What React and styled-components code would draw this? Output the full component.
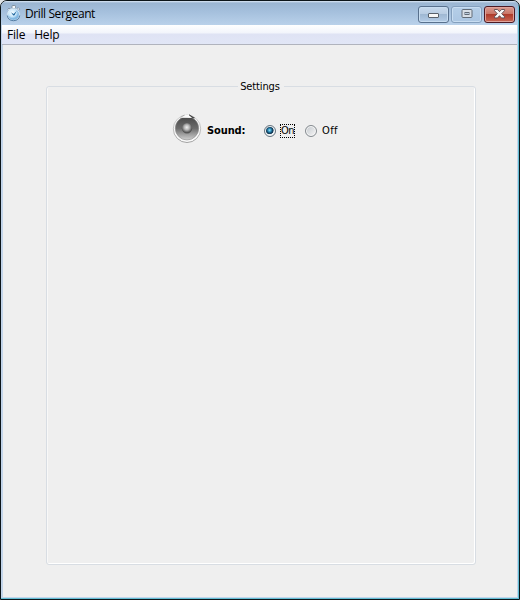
import React, { useState } from "react";
import styled, { createGlobalStyle } from "styled-components";

const GlobalStyle = createGlobalStyle`
  * { box-sizing: border-box; }
  body { margin: 0; background: #dfe3e6; overflow: hidden; }
`;

const Window = styled.div`
  width: 520px;
  height: 600px;
  display: flex;
  flex-direction: column;
  padding: 0 2px 2px 1px;
  border: 1px solid #0c1519;
  border-radius: 7px 7px 0 0;
  background: #c3d5ea;
  box-shadow: inset -1px -1px #62bdd3;
  color: #000;
  overflow: hidden;
`;

const TitleBar = styled.header`
  height: 24px;
  flex: none;
  display: flex;
  align-items: center;
  margin: 0 -1px;
  padding: 0 3px 0 4px;
  background: linear-gradient(#dce9f6 0, #9bb6d2 2px, #a5c0dd 45%, #b9d1ea 100%);
`;

const Title = styled.h1`
  flex: 1;
  margin: 1px 0 0 3px;
  font: 400 12px/18px "Open Sans", "Noto Sans", sans-serif;
  letter-spacing: -0.4px;
`;

const WindowButtons = styled.div`
  display: flex;
  gap: 2px;
  margin-top: 2px;
`;

const WindowButton = styled.button`
  width: 31px;
  height: 17px;
  display: flex;
  align-items: center;
  justify-content: center;
  padding: 0;
  border: 1px solid ${({ $kind }) => ({ close: "#4c1a24", disabled: "#849fbd" })[$kind] || "#58708d"};
  border-radius: 3px;
  box-shadow: inset 0 0 0 1px ${({ $kind }) => ($kind === "close" ? "#dfa49c" : "#c8ddf1")};
  background: ${({ $kind }) =>
    ({
      close: "linear-gradient(#d99b91 0%, #c97465 48%, #ae3c2c 50%, #c96755 100%)",
      disabled: "linear-gradient(#b5cee8, #abc6e2)",
    })[$kind] || "linear-gradient(#c7d9ec 0%, #b8cce2 48%, #9fb8d3 50%, #b4cce6 100%)"};
`;

const Menu = styled.nav`
  height: 20px;
  flex: none;
  display: flex;
  gap: 9px;
  padding: 0 5px;
  background: linear-gradient(#fff 0, #f2f5fb 8px, #dfe3f4 9px, #e1e6f6 100%);
  border-bottom: 1px solid #b0b3bd;
`;

const MenuItem = styled.span`
  font: 400 12px/20px "Open Sans", "Noto Sans", sans-serif;
  letter-spacing: -0.2px;
`;

const Content = styled.main`
  flex: 1;
  display: flex;
  padding: 34px 41px 32px 43px;
  margin-left: 1px;
  background: #efefef;
`;

const Settings = styled.fieldset`
  flex: 1;
  min-width: 0;
  margin: 0;
  padding: 20px 0 0;
  border: 1px solid #d8dde3;
  border-radius: 3px;
  box-shadow: inset -1px -1px #fff, inset 1px 0 #f8f8f8;
`;

const Legend = styled.legend`
  position: relative;
  left: -1px;
  margin: 0 auto;
  padding: 2px 3px 0;
  font: 400 11px/12px "DejaVu Sans Condensed", "DejaVu Sans", sans-serif;
  letter-spacing: -0.12px;
`;

const SoundRow = styled.div`
  display: flex;
  align-items: center;
  height: 30px;
  padding-left: 125px;
  font: 400 11px/14px "DejaVu Sans Condensed", "DejaVu Sans", sans-serif;
`;

const SoundLabel = styled.strong`
  width: 57px;
  margin: 5px 0 0 5px;
  letter-spacing: -0.1px;
`;

const Choice = styled.label`
  display: flex;
  align-items: center;
  gap: 5px;
  width: 41px;
  margin-top: 5px;
`;

const Radio = styled.input`
  appearance: none;
  flex: none;
  width: 12px;
  height: 12px;
  margin: 1px 0 0;
  border: 1px solid #858b90;
  border-radius: 50%;
  box-shadow: inset 0 0 0 1px #f8f8f8;
  background: linear-gradient(135deg, #c3c8cd, #f7f7f7);
  &:checked {
    border-color: #64737e;
    background: radial-gradient(circle at 46% 42%, #a9e4fa 0, #329ac5 1.5px, #123f5f 3px, #183e58 3.7px, #e7edf0 4.3px);
  }
`;

const ChoiceText = styled.span`
  height: 14px;
  line-height: 14px;
  padding: 0 1px;
  margin-left: -1px;
  letter-spacing: ${({ $tracking }) => $tracking}px;
  outline: ${({ $focused }) => ($focused ? "1px dotted #000" : "none")};
  outline-offset: -1px;
  white-space: nowrap;
`;

const Stopwatch = () => (
  <svg width="17" height="18" viewBox="0 0 17 18">
    <defs>
      <radialGradient id="watch" cx=".4" cy=".35">
        <stop stopColor="#f7fdff" />
        <stop offset=".65" stopColor="#c9e7fa" />
        <stop offset="1" stopColor="#82b8e2" />
      </radialGradient>
    </defs>
    <path d="M2.500 5.500l1.500-1.500 1.500 1.500M12 4.500L13.200 3.500l1.500 1.600-1 1" fill="#eef2f5" stroke="#73879a" strokeWidth=".8" />
    <rect x="7" y="1.500" width="3.500" height="3" rx=".8" fill="#f5f8fa" stroke="#6c7d8d" strokeWidth=".8" />
    <circle cx="8.500" cy="10.500" r="5.900" fill="url(#watch)" stroke="#edf3f8" strokeWidth=".7" />
    <path d="M2.300 11.500a6.300 6.300 0 0 0 12.400 0" fill="none" stroke="#436f99" strokeWidth=".9" />
    <path d="M6 8.300l2.600 1.700 3.100-3.100-2.200 4.300-1.300.3z" fill="#22689f" />
  </svg>
);

const Speaker = () => (
  <svg width="30" height="31" viewBox="0 0 30 31">
    <defs>
      <linearGradient id="rim" x2="0" y2="1">
        <stop stopColor="#c4c4c4" />
        <stop offset=".5" stopColor="#b0b0b0" />
        <stop offset="1" stopColor="#8b8b8b" />
      </linearGradient>
      <linearGradient id="cone" x2="0" y2="1">
        <stop stopColor="#484848" />
        <stop offset=".5" stopColor="#6b6b6b" />
        <stop offset="1" stopColor="#d0d0d0" />
      </linearGradient>
      <radialGradient id="dome" cx=".48" cy=".42">
        <stop stopColor="#f0f0f0" />
        <stop offset=".5" stopColor="#b5b5b5" />
        <stop offset="1" stopColor="#555" />
      </radialGradient>
    </defs>
    <circle cx="15" cy="15.800" r="13.700" fill="#fafafa" stroke="url(#rim)" strokeWidth=".8" />
    <circle cx="15" cy="15.300" r="11.700" fill="url(#cone)" stroke="#8a8a8a" strokeWidth=".6" />
    <circle cx="15" cy="15.200" r="5.200" fill="url(#dome)" />
    <path d="M8.500 4.800L13.500 2h3.500l5 3z" fill="#fafafa" />
    <path d="M17 1.700l5.500 3.200-2.500-.5z" fill="#252525" stroke="#252525" strokeWidth=".5" />
    <path d="M8.500 4.300l4-2.300" stroke="#999" strokeWidth=".7" />
  </svg>
);

const MinimizeIcon = () => (
  <svg width="12" height="10" viewBox="0 0 12 10">
    <rect x=".5" y="4.500" width="10" height="4" rx=".5" fill="#f7f7f7" stroke="#59616b" />
  </svg>
);

const RestoreIcon = () => (
  <svg width="12" height="10" viewBox="0 0 12 10">
    <rect x="1" y=".5" width="10" height="8" rx="1" fill="#d8dfe7" stroke="#626b76" />
    <rect x="4" y="3.500" width="4" height="2" fill="#bacbdd" stroke="#626b76" />
  </svg>
);

const CloseIcon = () => (
  <svg width="13" height="10" viewBox="0 0 13 10">
    <path d="M1.500.5h3l2 2.200L8.500.5h3v1.200L8.700 4.700l2.800 3v1.200h-3l-2-2.200-2 2.200h-3V7.700l2.800-3-2.800-3z" fill="#fafafa" stroke="#574a50" strokeWidth=".9" />
  </svg>
);

export default function App() {
  const [sound, setSound] = useState("on");
  return (
    <>
      <GlobalStyle />
      <Window>
        <TitleBar>
          <Stopwatch />
          <Title>Drill Sergeant</Title>
          <WindowButtons>
            <WindowButton aria-label="Minimize"><MinimizeIcon /></WindowButton>
            <WindowButton $kind="disabled" aria-label="Maximize"><RestoreIcon /></WindowButton>
            <WindowButton $kind="close" aria-label="Close"><CloseIcon /></WindowButton>
          </WindowButtons>
        </TitleBar>
        <Menu>
          <MenuItem>File</MenuItem>
          <MenuItem>Help</MenuItem>
        </Menu>
        <Content>
          <Settings>
            <Legend>Settings</Legend>
            <SoundRow>
              <Speaker />
              <SoundLabel>Sound:</SoundLabel>
              <Choice>
                <Radio type="radio" name="sound" checked={sound === "on"} onChange={() => setSound("on")} />
                <ChoiceText $focused={sound === "on"} $tracking={-0.5}>On</ChoiceText>
              </Choice>
              <Choice>
                <Radio type="radio" name="sound" checked={sound === "off"} onChange={() => setSound("off")} />
                <ChoiceText $focused={sound === "off"} $tracking={0.4}>Off</ChoiceText>
              </Choice>
            </SoundRow>
          </Settings>
        </Content>
      </Window>
    </>
  );
}
